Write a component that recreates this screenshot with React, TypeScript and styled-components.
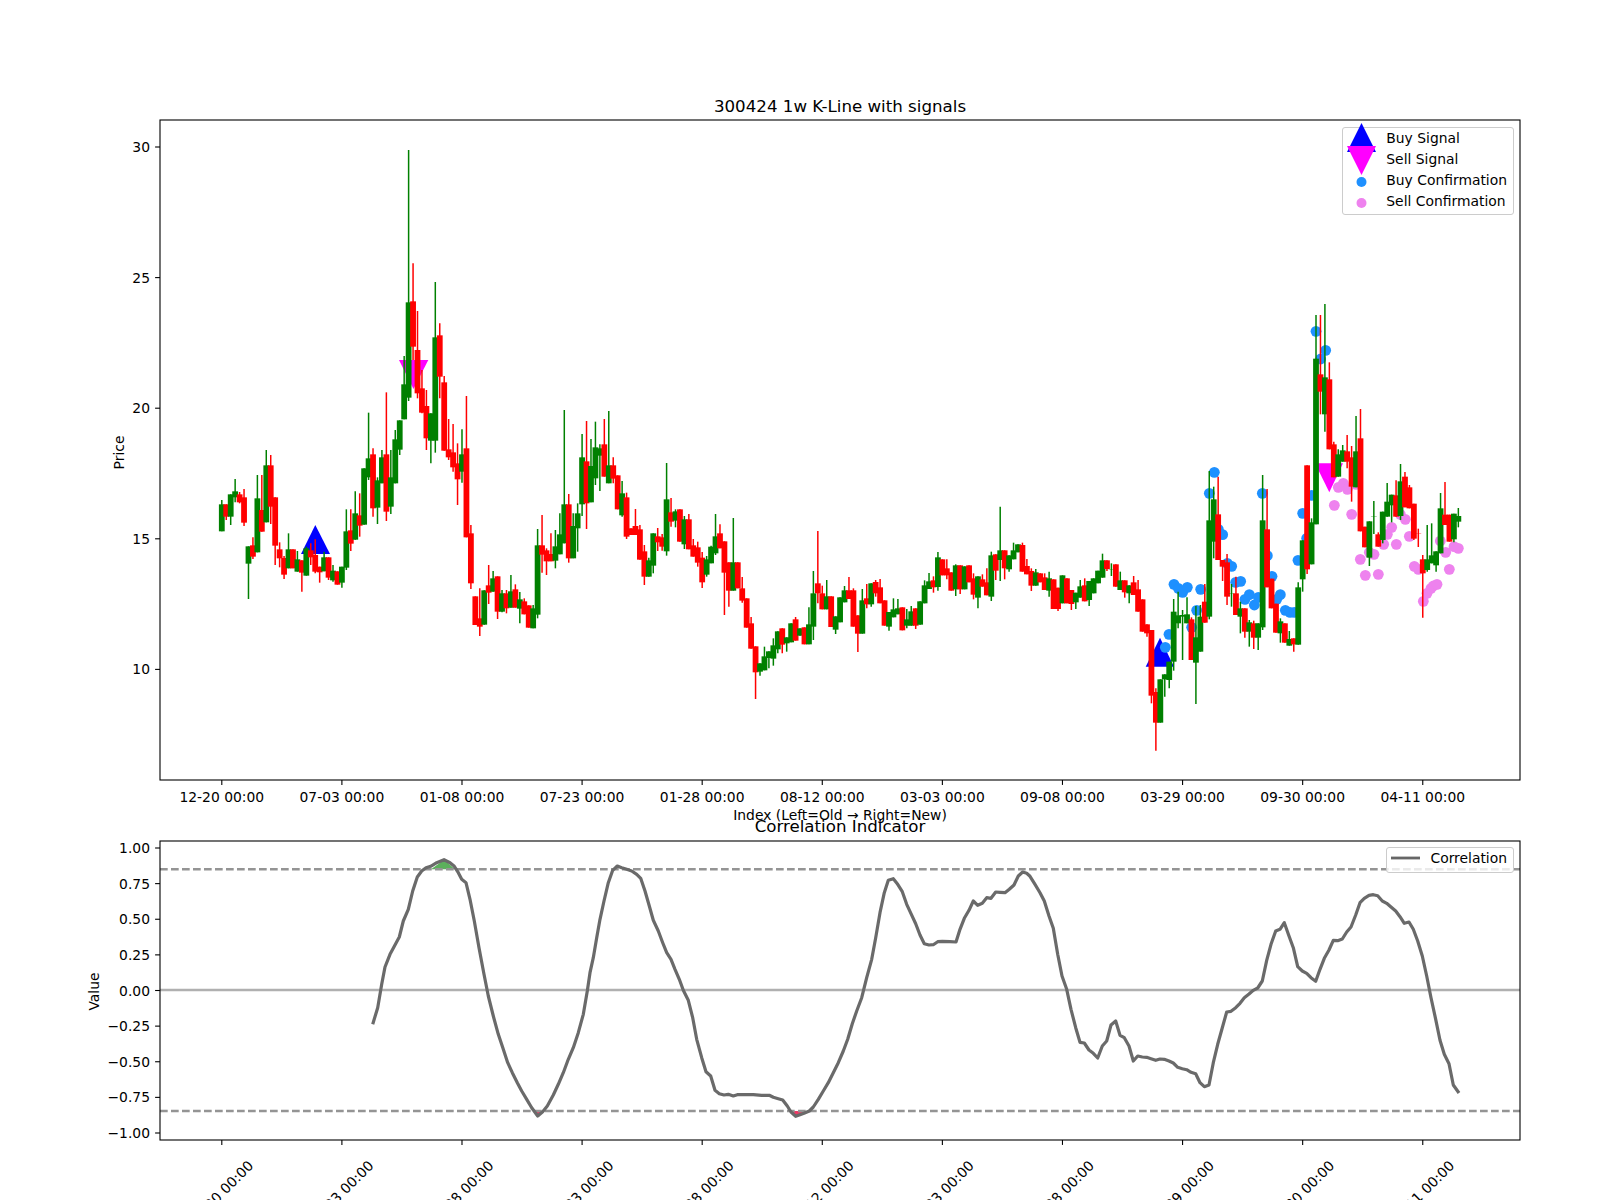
import styled, { createGlobalStyle } from "styled-components";

const GlobalStyle = createGlobalStyle`
  html, body {
    margin: 0;
    background: #fff;
  }
  body {
    overflow: hidden;
  }
`;

const Figure = styled.main`
  width: 1600px;
  height: 1200px;
  overflow: hidden;
  display: flex;
  flex-direction: column;
  background: #fff;
  color: #000;
  font-family: "DejaVu Sans", sans-serif;
`;

const PlotTitle = styled.h2<{ $top: number; $line: number }>`
  margin: ${(p) => p.$top}px 80px 0 160px;
  height: 24px;
  line-height: ${(p) => p.$line}px;
  font-size: 16.67px;
  font-weight: normal;
  text-align: center;
  white-space: nowrap;
  position: relative;
  z-index: 1;
`;

const Panel = styled.section`
  position: relative;
`;

const ChartSvg = styled.svg`
  display: block;
  width: 1600px;
  overflow: visible;
`;

const TickLabel = styled.text`
  font-family: "DejaVu Sans", sans-serif;
  font-size: 13.89px;
  fill: #000;
`;

const Frame = styled.rect`
  fill: none;
  stroke: #000;
  stroke-width: 1.1px;
`;

const TickMark = styled.line`
  stroke: #000;
  stroke-width: 1.1px;
`;

const Wick = styled.line<{ $up: boolean }>`
  stroke: ${(p) => (p.$up ? "#008000" : "#ff0000")};
  stroke-width: 1.5px;
`;

const CandleBody = styled.rect<{ $up: boolean }>`
  fill: ${(p) => (p.$up ? "#008000" : "#ff0000")};
`;

const Threshold = styled.line`
  stroke: #949494;
  stroke-width: 2.6px;
  stroke-dasharray: 7.7 3.3;
`;

const ZeroLine = styled.line`
  stroke: #b0b0b0;
  stroke-width: 2.6px;
`;

const CorrelationLine = styled.polyline`
  fill: none;
  stroke: #6a6a6a;
  stroke-width: 3.2px;
  stroke-linejoin: round;
`;

const Legend = styled.div<{ $top: number; $right: number }>`
  position: absolute;
  top: ${(p) => p.$top}px;
  right: ${(p) => p.$right}px;
  padding: 0 6px 3px 4px;
  border: 1px solid #ccc;
  border-radius: 3px;
  background: rgba(255, 255, 255, 0.8);
  font-size: 13.89px;
`;

const LegendRow = styled.div`
  display: flex;
  align-items: center;
  gap: 10px;
  height: 20.8px;
  white-space: nowrap;
`;

const LegendMark = styled.svg`
  display: block;
  width: 29px;
  height: 20px;
  overflow: visible;
  flex: none;
`;

type Candle = [number, number, number, number, number];

// up, wick top, body top, body bottom, wick bottom, read at 3x with y origin 380
const rowsA: Candle[] = [
  [1, 360, 373, 454, 454], [0, 373, 373, 410, 420], [1, 343, 343, 410, 435], [1, 297, 334, 352, 367],
  [0, 336, 343, 367, 370], [0, 327, 352, 428, 438], [1, 499, 499, 551, 657], [0, 472, 496, 530, 537],
  [1, 285, 355, 517, 517], [0, 285, 390, 455, 455], [1, 210, 256, 427, 427], [0, 225, 256, 380, 432],
  [0, 352, 352, 497, 555], [0, 487, 508, 535, 562], [0, 528, 534, 584, 597], [1, 460, 508, 565, 565],
  [0, 508, 508, 565, 565], [1, 513, 538, 575, 575], [0, 541, 541, 578, 635], [1, 500, 505, 587, 587],
  [0, 490, 511, 532, 555], [0, 478, 525, 575, 580], [0, 560, 560, 577, 608], [1, 515, 532, 574, 574],
  [0, 532, 532, 593, 600], [1, 555, 572, 601, 605], [0, 574, 574, 614, 614], [1, 560, 560, 608, 623],
  [1, 388, 454, 563, 570], [0, 388, 451, 491, 513], [1, 334, 400, 479, 479], [0, 340, 406, 437, 470],
  [1, 265, 265, 434, 434], [1, 98, 235, 292, 300], [0, 205, 223, 385, 410], [1, 292, 301, 383, 432],
  [1, 210, 232, 310, 310], [0, 37, 223, 395, 423], [1, 210, 292, 380, 402], [1, 150, 178, 310, 310],
  [1, 121, 121, 209, 225], [1, -72, 13, 118, 118], [1, -690, -233, 53, 63], [0, -350, -236, -100, -60],
  [0, -207, -90, 40, 55], [0, -30, 25, 98, 100], [0, 30, 78, 175, 210], [1, 100, 100, 182, 250],
  [1, -294, -128, 182, 218], [0, -170, -134, -10, 55], [0, -12, 7, 212, 212], [0, 117, 208, 232, 240],
  [0, 132, 217, 262, 275], [0, 190, 250, 298, 375], [1, 148, 223, 275, 308], [0, 48, 205, 472, 472],
  [0, 435, 460, 610, 627], [0, 649, 649, 735, 735], [0, 625, 715, 740, 768], [1, 631, 631, 734, 734],
  [0, 555, 616, 638, 672], [1, 573, 595, 635, 635], [0, 589, 589, 695, 717], [1, 630, 640, 695, 697],
  [0, 630, 640, 685, 700], [1, 585, 634, 683, 683], [0, 613, 628, 683, 683], [1, 636, 658, 686, 730],
  [0, 655, 664, 703, 703], [0, 676, 676, 743, 743], [1, 675, 685, 745, 745], [1, 447, 496, 704, 715],
  [0, 405, 496, 524, 578], [0, 505, 511, 544, 585], [0, 460, 522, 544, 544], [1, 450, 499, 542, 565],
  [1, 400, 463, 523, 523], [1, 90, 373, 490, 490], [0, 342, 373, 535, 548],
];

const rowsB: Candle[] = [
  [1, 400, 438, 535, 535], [1, 370, 400, 445, 515], [1, 162, 232, 373, 408], [0, 123, 244, 370, 447],
  [1, 177, 258, 367, 367], [1, 125, 202, 295, 315], [1, 193, 205, 227, 333], [0, 117, 193, 290, 290],
  [1, 93, 256, 310, 310], [0, 232, 256, 296, 310], [0, 286, 286, 388, 388], [1, 303, 340, 406, 410],
  [0, 338, 352, 470, 477], [0, 445, 445, 465, 465], [0, 387, 438, 465, 465], [0, 435, 448, 539, 539],
  [0, 495, 514, 590, 615], [1, 533, 541, 590, 590], [1, 460, 460, 557, 580], [0, 444, 469, 487, 513],
  [0, 462, 472, 500, 512], [1, 249, 358, 514, 527], [0, 354, 397, 425, 440], [1, 388, 394, 422, 442],
  [0, 388, 388, 485, 485], [1, 408, 418, 493, 507], [0, 402, 418, 508, 508], [0, 477, 496, 530, 530],
  [0, 485, 502, 548, 560], [0, 516, 533, 607, 624], [1, 528, 538, 584, 590], [1, 497, 500, 550, 550],
  [1, 402, 469, 520, 525], [0, 433, 460, 505, 505], [0, 484, 484, 578, 705], [0, 547, 547, 632, 680],
  [1, 414, 547, 632, 632], [0, 547, 547, 625, 625], [0, 591, 625, 662, 668], [0, 655, 655, 743, 743],
  [0, 711, 730, 806, 806], [0, 799, 799, 877, 957], [1, 850, 850, 875, 887], [1, 800, 829, 871, 871],
  [1, 814, 814, 834, 865], [1, 775, 796, 836, 857], [1, 754, 754, 808, 820], [0, 745, 745, 794, 820],
  [1, 772, 772, 790, 815], [1, 730, 730, 787, 787], [0, 711, 718, 782, 782], [1, 745, 745, 767, 767],
  [0, 742, 742, 793, 793], [1, 682, 733, 793, 793], [1, 573, 640, 740, 780], [0, 453, 610, 640, 670],
  [0, 617, 640, 688, 688], [1, 600, 649, 688, 688], [0, 649, 649, 741, 741], [1, 709, 709, 749, 762],
  [1, 652, 652, 727, 727], [1, 618, 631, 667, 667], [0, 591, 631, 657, 657], [0, 625, 631, 740, 740],
  [0, 706, 706, 761, 816], [1, 627, 661, 761, 761], [0, 612, 655, 673, 685], [1, 610, 610, 673, 680],
  [0, 600, 606, 640, 650], [0, 597, 622, 670, 670], [0, 661, 661, 737, 737], [1, 696, 696, 740, 752],
  [1, 655, 688, 712, 712], [1, 657, 685, 703, 703], [0, 682, 682, 751, 751], [1, 687, 718, 737, 745],
  [1, 678, 694, 737, 737], [0, 685, 685, 737, 747], [1, 664, 664, 734, 734], [1, 601, 616, 670, 670],
  [1, 579, 604, 627, 627], [0, 589, 601, 622, 638], [1, 516, 532, 621, 632], [0, 538, 538, 586, 586],
  [0, 538, 565, 586, 598], [0, 577, 577, 632, 632], [1, 553, 556, 628, 648], [0, 556, 556, 628, 642],
  [1, 559, 559, 628, 628], [0, 556, 556, 607, 607], [0, 580, 595, 644, 658], [1, 589, 589, 653, 685],
  [0, 583, 598, 620, 620], [0, 565, 607, 646, 646],
];

// y origin 500
const rowsC: Candle[] = [
  [1, 155, 166, 290, 303], [0, 163, 163, 212, 240], [1, 20, 151, 180, 243], [0, 151, 151, 205, 238],
  [1, 166, 166, 208, 215], [1, 128, 151, 178, 178], [1, 133, 133, 157, 157], [0, 128, 135, 215, 215],
  [0, 177, 198, 223, 223], [0, 205, 213, 257, 273], [1, 207, 217, 257, 257], [0, 220, 220, 247, 247],
  [0, 220, 232, 270, 270], [1, 215, 235, 272, 290], [0, 238, 238, 327, 327], [0, 263, 263, 327, 333],
  [1, 226, 226, 310, 310], [0, 235, 235, 310, 310], [0, 270, 270, 312, 330], [1, 278, 278, 307, 327],
  [1, 240, 259, 293, 293], [0, 235, 256, 304, 304], [1, 243, 243, 300, 318], [1, 235, 235, 280, 280],
  [1, 212, 212, 250, 250], [1, 161, 181, 233, 233], [0, 181, 181, 207, 213], [1, 190, 208, 209, 228],
  [0, 193, 193, 260, 260], [1, 215, 241, 270, 270], [0, 241, 241, 277, 293], [1, 256, 256, 280, 310],
  [0, 228, 247, 285, 285], [0, 240, 268, 335, 335],
];

// y origin 300
const rowsD: Candle[] = [
  [0, 898, 898, 995, 995], [0, 973, 973, 1000, 1010], [0, 990, 990, 1187, 1210], [0, 1165, 1176, 1268, 1352],
  [1, 1138, 1138, 1268, 1268], [1, 1123, 1123, 1138, 1190], [1, 1085, 1085, 1140, 1165], [1, 897, 935, 1085, 1112],
  [1, 875, 946, 970, 985], [1, 930, 945, 950, 1080], [1, 892, 943, 970, 970], [0, 952, 958, 1080, 1080],
  [1, 918, 1012, 1088, 1212], [1, 915, 950, 1055, 1055], [0, 852, 905, 968, 968], [1, 513, 661, 950, 958],
  [1, 560, 598, 725, 775], [0, 530, 643, 780, 780], [0, 780, 780, 800, 843], [0, 762, 787, 890, 915],
  [1, 852, 880, 881, 920], [0, 830, 880, 945, 945], [1, 905, 925, 950, 1000], [0, 925, 925, 995, 1013],
  [1, 960, 967, 995, 1040], [0, 962, 970, 1013, 1047], [1, 970, 970, 1013, 1050], [1, 525, 661, 982, 990],
  [0, 567, 688, 862, 862], [0, 836, 836, 925, 925], [0, 911, 911, 998, 998], [1, 955, 964, 1000, 1028],
  [0, 970, 970, 1028, 1028], [1, 993, 1017, 1037, 1037], [0, 1015, 1015, 1033, 1055], [1, 847, 862, 1034, 1034],
  [1, 721, 721, 838, 875], [0, 496, 496, 808, 822], [1, 655, 667, 793, 793], [1, 45, 176, 673, 673],
  [0, 45, 223, 275, 343], [1, 12, 232, 343, 395], [0, 187, 238, 448, 448], [0, 425, 433, 532, 532],
  [1, 448, 463, 530, 530], [1, 435, 451, 485, 485], [0, 405, 454, 485, 505], [0, 438, 472, 560, 605],
  [1, 348, 454, 562, 562], [0, 327, 415, 694, 694], [0, 680, 680, 742, 742], [1, 664, 664, 773, 798],
  [1, 603, 650, 651, 702], [0, 697, 703, 740, 740], [1, 635, 635, 720, 730], [1, 549, 605, 650, 650],
  [1, 584, 584, 616, 667], [0, 541, 586, 650, 650], [1, 492, 544, 648, 660], [0, 516, 530, 622, 622],
  [0, 555, 562, 625, 625], [0, 611, 611, 716, 720], [0, 686, 700, 701, 741], [0, 765, 778, 820, 953],
  [1, 675, 778, 810, 815], [1, 670, 766, 790, 790], [1, 754, 754, 796, 815], [1, 579, 625, 760, 760],
  [0, 546, 644, 675, 675], [0, 644, 644, 725, 725], [1, 641, 641, 718, 727], [1, 624, 648, 665, 682],
];

const toPage = (rows: Candle[], top: number): Candle[] =>
  rows.map(([up, a, b, c, d]) => [up, top + a / 3, top + b / 3, top + c / 3, top + d / 3]);

const candles = [
  ...toPage(rowsA, 380),
  ...toPage(rowsB, 380),
  ...toPage(rowsC, 500),
  ...toPage(rowsD, 300),
];

const candleX = (i: number) => 221.8 + 4.448 * i;
const tickX = (i: number) => candleX(i * 27);

const dates = [
  "12-20 00:00", "07-03 00:00", "01-08 00:00", "07-23 00:00", "01-28 00:00", "08-12 00:00",
  "03-03 00:00", "09-08 00:00", "03-29 00:00", "09-30 00:00", "04-11 00:00",
];

const priceTicks = [
  [30, 147], [25, 277.6], [20, 408.2], [15, 538.8], [10, 669.4],
];

const corrTicks = [1, 0.75, 0.5, 0.25, 0, -0.25, -0.5, -0.75, -1];
const corrY = (v: number) => 990.5 - v * 142.5;
const formatCorr = (v: number) => (v < 0 ? "\u2212" : "") + Math.abs(v).toFixed(2);

const dots = (pts: number[][]) => pts.map(([x, y]) => [1100 + x / 3, 300 + y / 3]);

const buyDots = dots([
  [343, 517], [328, 580], [487, 580], [648, 94], [677, 151], [662, 177], [222, 853], [235, 865], [248, 877],
  [262, 862], [302, 868], [290, 931], [275, 982], [207, 1003], [196, 1042], [355, 688], [368, 704], [382, 790],
  [395, 799], [407, 847], [422, 844], [435, 898], [448, 884], [463, 915], [475, 892], [502, 767], [516, 829],
  [530, 898], [541, 884], [556, 931], [570, 937], [583, 937], [594, 781], [608, 640], [620, 715], [635, 586],
]);

const sellDots = dots([
  [703, 616], [715, 562], [730, 550], [742, 568], [755, 643], [768, 553], [781, 778], [796, 826], [808, 757],
  [822, 763], [835, 823], [851, 733], [862, 703], [875, 682], [889, 733], [901, 643], [916, 658], [928, 709],
  [943, 799], [955, 808], [970, 904], [981, 880], [993, 865], [1000, 858], [1011, 853], [1021, 723], [1037, 757],
  [1048, 808], [1062, 740], [1075, 745],
]);

// correlation line, read at 3x per crop; y origin is the top of the lower axes
const corrSegments: [number, number[][]][] = [
  [340, [
    [98, 550], [113, 500], [125, 430], [135, 378], [150, 340], [165, 312], [178, 288], [190, 240], [205, 205],
    [218, 150], [232, 108], [245, 90], [258, 80], [272, 76], [290, 65], [312, 56], [330, 65], [343, 76], [355, 95],
    [365, 115], [378, 125], [390, 175], [403, 240], [417, 320], [432, 400], [445, 465], [460, 525], [475, 580],
    [490, 625], [503, 665], [517, 695], [532, 725], [545, 750], [560, 775], [575, 800], [593, 825], [608, 812],
    [622, 795], [640, 762], [655, 730], [670, 695], [685, 655], [700, 620], [715, 575], [730, 520], [742, 450],
  ]],
  [580, [
    [30, 395], [40, 350], [50, 290], [60, 235], [72, 180], [85, 125], [98, 88], [112, 75], [125, 80], [140, 85],
    [155, 90], [170, 100], [182, 112], [195, 150], [208, 195], [220, 238], [235, 270], [248, 305], [260, 335],
    [273, 355], [285, 385], [298, 415], [310, 448], [325, 478], [338, 530], [350, 595], [365, 650], [378, 692],
    [392, 705], [405, 748], [418, 758], [432, 762], [445, 760], [460, 765], [472, 761], [490, 761], [520, 761],
    [545, 763], [568, 763], [580, 769], [595, 773], [608, 777], [622, 795], [633, 813], [647, 826], [660, 821],
    [672, 817], [688, 810], [700, 798], [715, 775], [730, 750], [745, 725], [760, 695], [775, 665], [790, 630],
    [803, 595], [817, 548], [830, 510], [845, 470], [860, 410], [875, 355], [887, 290], [900, 215], [913, 155],
    [925, 118], [940, 113], [953, 130], [967, 152], [980, 190], [993, 218], [1007, 248], [1020, 282], [1033, 308],
    [1047, 312], [1060, 311], [1073, 302], [1087, 301], [1110, 302], [1128, 303], [1140, 265], [1153, 232],
    [1167, 208], [1180, 180], [1193, 193], [1207, 187], [1220, 170], [1233, 172], [1247, 153], [1260, 154],
    [1275, 155], [1288, 145], [1302, 132], [1315, 105], [1328, 93], [1340, 97],
  ]],
  [1030, [
    [0, 106], [15, 130], [30, 155], [43, 180], [57, 225], [70, 262], [83, 340], [96, 405], [110, 445], [123, 505],
    [137, 560], [150, 604], [163, 606], [177, 627], [190, 637], [203, 651], [217, 615], [230, 600], [243, 552],
    [257, 540], [270, 583], [283, 590], [297, 615], [310, 660], [323, 645], [337, 648], [350, 649], [363, 653],
    [377, 658], [390, 654], [403, 655], [417, 660], [430, 666], [443, 679], [457, 683], [470, 686], [483, 694],
    [497, 698], [510, 725], [523, 737], [537, 732], [550, 665], [563, 610], [577, 560], [590, 513], [603, 511],
    [617, 500], [630, 487], [643, 470], [657, 459], [670, 448], [683, 441], [697, 420], [710, 358], [723, 310],
    [737, 270], [750, 265], [763, 245], [777, 285], [790, 320], [803, 377], [817, 390], [830, 397], [843, 410],
    [857, 421], [870, 385], [883, 352], [897, 327], [910, 298], [923, 299], [937, 294], [950, 273], [963, 258],
    [977, 222], [990, 185], [1003, 172], [1017, 163], [1030, 161], [1043, 164], [1057, 180], [1070, 187],
    [1083, 198], [1097, 210], [1110, 227], [1123, 247], [1137, 243], [1150, 265], [1163, 300], [1177, 345],
    [1190, 405], [1203, 470], [1217, 535], [1230, 598], [1243, 640], [1257, 668], [1270, 732], [1287, 756],
  ]],
];

const corrPoints = corrSegments
  .flatMap(([left, pts]) => pts.map(([x, y]) => `${(left + x / 3).toFixed(1)},${(841 + y / 3).toFixed(1)}`))
  .join(" ");

function XTicks({ top }: { top: number }) {
  return (
    <>
      {dates.map((_, i) => (
        <TickMark key={i} x1={tickX(i)} x2={tickX(i)} y1={top} y2={top + 4.9} />
      ))}
    </>
  );
}

function PriceChart() {
  return (
    <ChartSvg viewBox="0 120 1600 702" height={702}>
      <polygon points="315.3,525 301,554 330,554" fill="#0000ff" />
      <polygon points="1160,637.7 1145.7,666.7 1174,666.7" fill="#0000ff" />
      <polygon points="399,360 428.3,360 413.5,389" fill="#ff00ff" />
      <polygon points="1315,463.3 1343,463.3 1329.3,492.3" fill="#ff00ff" />
      {buyDots.map(([x, y], i) => (
        <circle key={i} cx={x} cy={y} r={5.4} fill="#1e90ff" />
      ))}
      {sellDots.map(([x, y], i) => (
        <circle key={i} cx={x} cy={y} r={5.4} fill="#ee82ee" />
      ))}
      {candles.map(([up, wickTop, bodyTop, bodyBottom, wickBottom], i) => (
        <g key={i}>
          <Wick $up={up === 1} x1={candleX(i)} x2={candleX(i)} y1={wickTop} y2={wickBottom} />
          <CandleBody
            $up={up === 1}
            x={candleX(i) - 2.9}
            y={bodyTop}
            width={5.8}
            height={Math.max(bodyBottom - bodyTop, 0.3)}
          />
        </g>
      ))}
      <Frame x={160} y={120} width={1360} height={660} />
      <XTicks top={780} />
      {dates.map((d, i) => (
        <TickLabel key={d} x={tickX(i)} y={802} textAnchor="middle">
          {d}
        </TickLabel>
      ))}
      {priceTicks.map(([v, y]) => (
        <g key={v}>
          <TickMark x1={155.1} x2={160} y1={y} y2={y} />
          <TickLabel x={150} y={y + 5} textAnchor="end">
            {v}
          </TickLabel>
        </g>
      ))}
      <TickLabel x={840} y={820} textAnchor="middle">
        Index (Left=Old → Right=New)
      </TickLabel>
      <TickLabel textAnchor="middle" transform="translate(124 452.5) rotate(-90)">
        Price
      </TickLabel>
    </ChartSvg>
  );
}

function CorrelationChart() {
  return (
    <ChartSvg viewBox="0 841 1600 359" height={359}>
      <polygon points="431,869.3 444.3,859.7 455,869.3" fill="#5cb05c" />
      <polygon points="791,1111 795.7,1116.3 809.3,1111" fill="#ee3a66" />
      <polygon points="536,1111 538,1116 541.7,1111" fill="#ee3a66" />
      <Threshold x1={160} x2={1520} y1={869.3} y2={869.3} />
      <Threshold x1={160} x2={1520} y1={1111} y2={1111} />
      <ZeroLine x1={160} x2={1520} y1={990} y2={990} />
      <CorrelationLine points={corrPoints} />
      <Frame x={160} y={841} width={1360} height={299} />
      <XTicks top={1140} />
      {dates.map((d, i) => (
        <TickLabel
          key={d}
          textAnchor="middle"
          transform={`translate(${tickX(i) - 1} 1193) rotate(-45) translate(0 5)`}
        >
          {d}
        </TickLabel>
      ))}
      {corrTicks.map((v) => (
        <g key={v}>
          <TickMark x1={155.1} x2={160} y1={corrY(v)} y2={corrY(v)} />
          <TickLabel x={150} y={corrY(v) + 5} textAnchor="end">
            {formatCorr(v)}
          </TickLabel>
        </g>
      ))}
      <TickLabel textAnchor="middle" transform="translate(99 991.5) rotate(-90)">
        Value
      </TickLabel>
    </ChartSvg>
  );
}

export default function App() {
  return (
    <>
      <GlobalStyle />
      <Figure>
        <PlotTitle $top={96} $line={21}>
          300424 1w K-Line with signals
        </PlotTitle>
        <Panel>
          <PriceChart />
          <Legend $top={7} $right={86}>
            <LegendRow>
              <LegendMark viewBox="0 0 29 20">
                <polygon points="14.5,-5 0,24 29,24" fill="#0000ff" />
              </LegendMark>
              Buy Signal
            </LegendRow>
            <LegendRow>
              <LegendMark viewBox="0 0 29 20">
                <polygon points="0,-3 29,-3 14.5,26" fill="#ff00ff" />
              </LegendMark>
              Sell Signal
            </LegendRow>
            <LegendRow>
              <LegendMark viewBox="0 0 29 20">
                <circle cx="14.5" cy="12" r="5" fill="#1e90ff" />
              </LegendMark>
              Buy Confirmation
            </LegendRow>
            <LegendRow>
              <LegendMark viewBox="0 0 29 20">
                <circle cx="14.5" cy="12" r="5" fill="#ee82ee" />
              </LegendMark>
              Sell Confirmation
            </LegendRow>
          </Legend>
        </Panel>
        <PlotTitle $top={-5} $line={19}>
          Correlation Indicator
        </PlotTitle>
        <Panel>
          <CorrelationChart />
          <Legend $top={6} $right={86}>
            <LegendRow>
              <LegendMark viewBox="0 0 29 20">
                <line x1="0" x2="29" y1="10" y2="10" stroke="#666" strokeWidth="2.8" />
              </LegendMark>
              Correlation
            </LegendRow>
          </Legend>
        </Panel>
      </Figure>
    </>
  );
}
